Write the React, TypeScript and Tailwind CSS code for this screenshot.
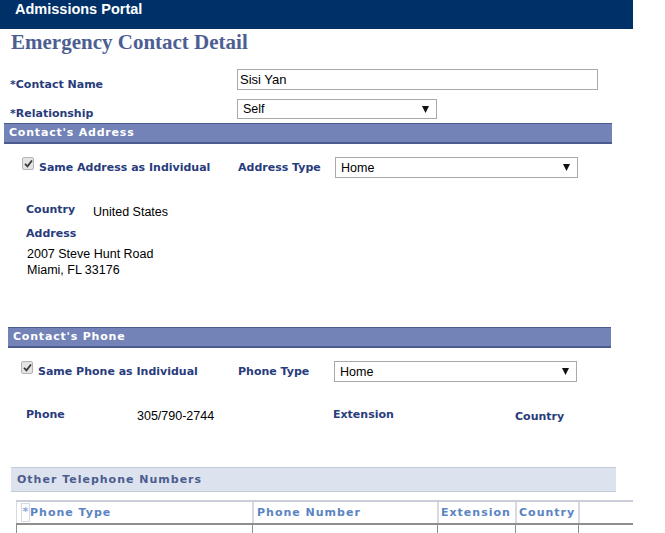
import React from "react";

const LABEL = "font-['DejaVu_Sans',sans-serif] font-bold text-[11px] leading-[14px] text-[#283c7c] whitespace-nowrap";
const BODY = "font-['Liberation_Sans',Arial,sans-serif] text-[12.5px] leading-[14px] text-black whitespace-nowrap";

function Arrow() {
  return (
    <svg width="7" height="7" viewBox="0 0 7 7" className="shrink-0">
      <polygon points="0,0 7,0 3.5,7" fill="#111" />
    </svg>
  );
}

function Select({ value, w, h }: { value: string; w: string; h: string }) {
  return (
    <div className={`${w} ${h} border border-[#a9a9a9] bg-white flex items-center justify-between pl-[5px] pr-[7px] shrink-0`}>
      <span className="font-['Liberation_Sans',Arial,sans-serif] text-[12.5px] text-black leading-[14px]">{value}</span>
      <Arrow />
    </div>
  );
}

function Check() {
  return (
    <div className="w-[12px] h-[13px] rounded-[2px] border border-[#b4b4b4] bg-[#e4e4e4] flex items-center justify-center shrink-0">
      <svg width="9" height="9" viewBox="0 0 9 9">
        <path d="M1 4.8 L3.5 7.3 L8 1.5" stroke="#3a3a3a" strokeWidth="1.8" fill="none" />
      </svg>
    </div>
  );
}

function SectionBar({ title, cls }: { title: string; cls: string }) {
  return (
    <div className={`${cls} h-[21px] bg-[#7383b7] border-t border-b-2 border-[#4b5b8e] pl-[5px] pt-[1px] font-['DejaVu_Sans',sans-serif] font-bold text-[11px] leading-[16px] tracking-[0.8px] text-white whitespace-nowrap`}>
      {title}
    </div>
  );
}

export default function App() {
  const th = "font-['DejaVu_Sans',sans-serif] font-bold text-[11px] leading-[14px] tracking-[1px] text-[#5a84c3] whitespace-nowrap";
  return (
    <div className="w-[665px] h-[533px] overflow-hidden bg-white flex flex-col *:shrink-0">
      {/* top bar */}
      <div className="w-[633px] h-[29px] bg-[#003068] pl-[15px] pt-[1px] font-['Liberation_Sans',Arial,sans-serif] font-bold text-[14.5px] leading-[16px] text-white">
        Admissions Portal
      </div>

      {/* title */}
      <div className="mt-[1px] h-[24px] pl-[11px] font-['Liberation_Serif','Times_New_Roman',serif] font-bold text-[21px] leading-[24px] text-[#4d5e93] whitespace-nowrap">
        Emergency Contact Detail
      </div>

      {/* contact name */}
      <div className="mt-[15px] h-[21px] flex">
        <div className={`${LABEL} ml-[10px] w-[227px] pt-[9px]`}>*Contact Name</div>
        <div className="w-[361px] h-[21px] border border-[#a9a9a9] pl-[2px] font-['Liberation_Sans',Arial,sans-serif] text-[13px] leading-[19px] text-black">
          Sisi Yan
        </div>
      </div>

      {/* relationship */}
      <div className="mt-[9px] h-[20px] flex">
        <div className={`${LABEL} ml-[10px] w-[227px] pt-[8px]`}>*Relationship</div>
        <Select value="Self" w="w-[200px]" h="h-[20px]" />
      </div>

      <SectionBar title="Contact's Address" cls="mt-[4px] ml-[4px] w-[608px]" />

      {/* same address row */}
      <div className="mt-[13px] h-[21px] flex">
        <div className="ml-[22px] w-[216px] flex">
          <Check />
          <div className={`${LABEL} ml-[5px] pt-[4px]`}>Same Address as Individual</div>
        </div>
        <div className={`${LABEL} w-[97px] pt-[4px]`}>Address Type</div>
        <Select value="Home" w="w-[243px]" h="h-[21px]" />
      </div>

      {/* country */}
      <div className="mt-[25px] h-[14px] flex">
        <div className={`${LABEL} ml-[26px] w-[67px]`}>Country</div>
        <div className={`${BODY} mt-[2px]`}>United States</div>
      </div>

      {/* address */}
      <div className={`${LABEL} mt-[10px] ml-[26px]`}>Address</div>
      <div className="mt-[5px] ml-[27px] font-['Liberation_Sans',Arial,sans-serif] text-[12.5px] leading-[16px] text-black">
        <div>2007 Steve Hunt Road</div>
        <div>Miami, FL 33176</div>
      </div>

      <SectionBar title="Contact's Phone" cls="mt-[49px] ml-[8px] w-[603px]" />

      {/* same phone row */}
      <div className="mt-[13px] h-[21px] flex">
        <div className="ml-[21px] w-[217px] flex">
          <Check />
          <div className={`${LABEL} ml-[5px] pt-[4px]`}>Same Phone as Individual</div>
        </div>
        <div className={`${LABEL} w-[96px] pt-[4px]`}>Phone Type</div>
        <Select value="Home" w="w-[243px]" h="h-[21px]" />
      </div>

      {/* phone row */}
      <div className="mt-[26px] h-[14px] flex">
        <div className={`${LABEL} ml-[26px] w-[111px]`}>Phone</div>
        <div className={`${BODY} mt-[1px] w-[196px]`}>305/790-2744</div>
        <div className={`${LABEL} w-[182px]`}>Extension</div>
        <div className={`${LABEL} mt-[2px]`}>Country</div>
      </div>

      {/* other telephone numbers */}
      <div className="mt-[45px] ml-[11px] w-[605px] h-[25px] bg-[#dce3ee] border-t border-b border-[#c3cbda] pl-[6px] pt-[5px] font-['DejaVu_Sans',sans-serif] font-bold text-[11px] leading-[14px] tracking-[1px] text-[#4c5c8e] whitespace-nowrap">
        Other Telephone Numbers
      </div>

      {/* table */}
      <div className="mt-[8px] ml-[16px] w-[617px] flex flex-col">
        <div className="h-[25px] flex border-t-2 border-[#c9ced8] border-b-2 border-b-[#8e8e8e]">
          <div className="w-[236px] border-l border-[#d5dae3] flex pl-[4px] pt-[1px]">
            <div className="w-[9px] h-[19px] border border-[#d5dae3] text-[#8aa6d6] font-['DejaVu_Sans',sans-serif] font-bold text-[11px] leading-[14px] text-center pt-[1px]">*</div>
            <div className={`${th} mt-[3px]`}>Phone Type</div>
          </div>
          <div className="w-[185px] border-l-2 border-[#d5dae3] pl-[3px] pt-[4px]">
            <div className={th}>Phone Number</div>
          </div>
          <div className="w-[78px] border-l-2 border-[#d5dae3] pl-[2px] pt-[4px]">
            <div className={th}>Extension</div>
          </div>
          <div className="w-[63px] border-l-2 border-[#d5dae3] pl-[2px] pt-[4px]">
            <div className={th}>Country</div>
          </div>
          <div className="flex-1 border-l-2 border-[#d5dae3]" />
        </div>
        <div className="h-[20px] flex">
          <div className="w-[236px] border-l border-[#8e8e8e]" />
          <div className="w-[185px] border-l border-[#8e8e8e]" />
          <div className="w-[78px] border-l border-[#8e8e8e]" />
          <div className="w-[63px] border-l border-[#8e8e8e]" />
          <div className="flex-1 border-l border-[#8e8e8e]" />
        </div>
      </div>
    </div>
  );
}
